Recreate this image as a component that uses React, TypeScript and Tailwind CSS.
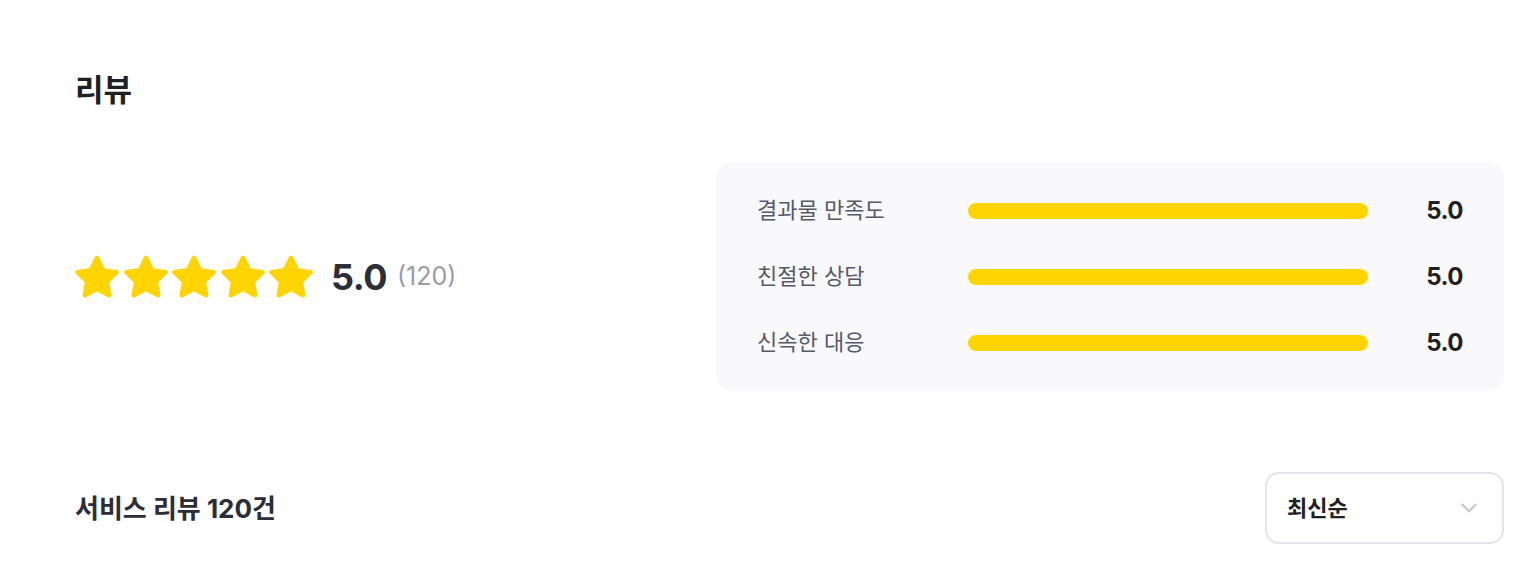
import { FiChevronDown } from "react-icons/fi";

const font = { fontFamily: 'Inter, "Noto Sans CJK KR", sans-serif' };

const scores = [
    { label: "결과물 만족도", value: "5.0" },
    { label: "친절한 상담", value: "5.0" },
    { label: "신속한 대응", value: "5.0" },
];

function Star() {
    return (
        <svg viewBox="1.6 1.9 20.8 20.8" className="w-[44px] h-[44px]">
            <path
                d="M12 2.3c.4 0 .8.2 1 .6l2.6 5.3 5.8.8c.9.1 1.3 1.2.6 1.8l-4.2 4.1 1 5.8c.2.9-.8 1.6-1.6 1.2L12 19.1l-5.2 2.8c-.8.4-1.8-.3-1.6-1.2l1-5.8L2 10.8c-.7-.6-.3-1.7.6-1.8l5.8-.8L11 2.9c.2-.4.6-.6 1-.6z"
                fill="#FFD400"
            />
        </svg>
    );
}

export default function App() {
    return (
        <div className="w-full bg-white pl-[75px] pr-[26px] pt-[70px]" style={font}>
            <h2 className="text-[31px] font-bold text-[#1f2024] leading-[40px]">리뷰</h2>

            {/* 평점 요약 */}
            <div className="flex items-center mt-[52px]">
                <div className="flex items-center flex-1">
                    <div className="flex gap-[4.5px]">
                        <Star />
                        <Star />
                        <Star />
                        <Star />
                        <Star />
                    </div>
                    <span className="ml-[18px] text-[36px] font-bold text-[#2b2e38] tracking-[-0.5px]">5.0</span>
                    <span className="ml-[10px] text-[25px] text-[#9b9ba8]">(120)</span>
                </div>

                <div className="w-[788px] h-[229px] rounded-[16px] bg-[#f9f9fb] px-[41px] flex flex-col justify-center gap-[30px]">
                    {scores.map((s) => (
                        <div key={s.label} className="flex items-center h-[36px]">
                            <span className="w-[211px] text-[22px] text-[#555969]">{s.label}</span>
                            <div className="w-[400px] h-[16px] rounded-full bg-[#FFD400]" />
                            <span className="ml-auto text-[24px] font-bold text-[#1f2024] tracking-[-0.5px]">{s.value}</span>
                        </div>
                    ))}
                </div>
            </div>

            {/* 리뷰 목록 헤더 */}
            <div className="flex items-center justify-between mt-[81px]">
                <span className="text-[26px] font-bold text-[#2b2e38]">서비스 리뷰 120건</span>
                <button className="w-[239px] h-[72px] rounded-[14px] border-2 border-[#e4e4ea] bg-white flex items-center justify-between pl-[20px] pr-[20px]">
                    <span className="text-[22px] font-bold text-[#1f2024]">최신순</span>
                    <FiChevronDown className="text-[26px] text-[#c5c5cd]" />
                </button>
            </div>
        </div>
    );
}
